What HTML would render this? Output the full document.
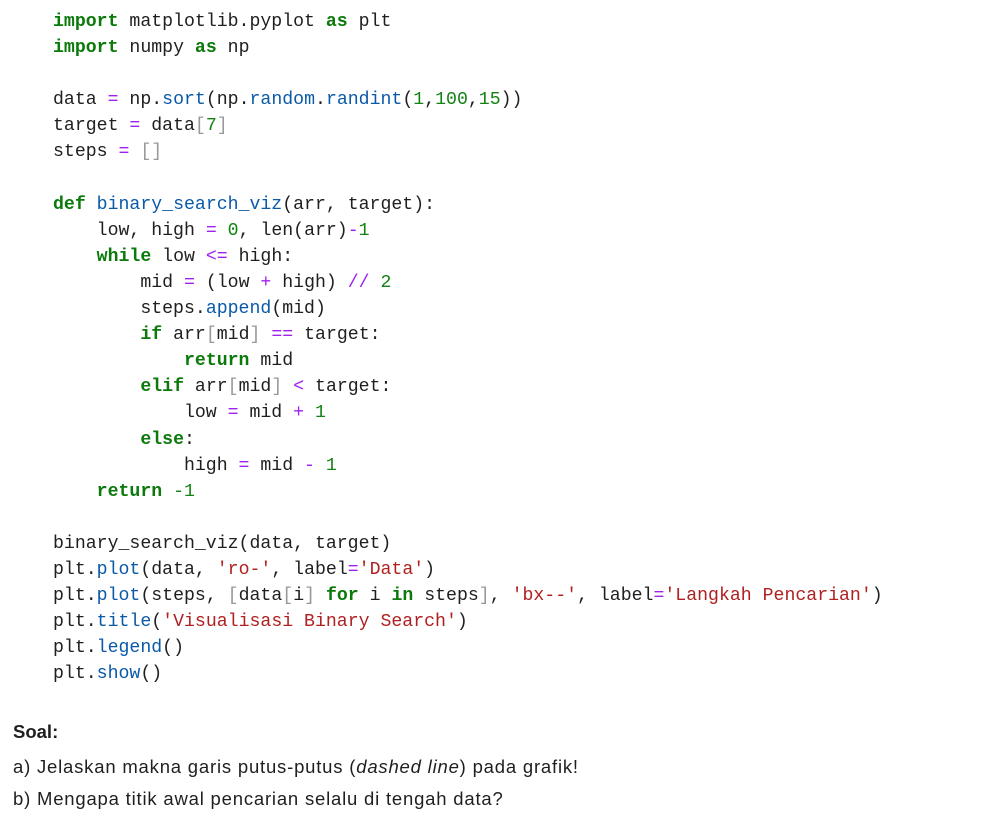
<!DOCTYPE html>
<html><head><meta charset="utf-8"><style>
html,body{margin:0;padding:0;background:#fff;width:991px;height:821px;overflow:hidden}
pre{position:absolute;left:53px;top:9px;margin:0;font-family:"Liberation Mono",monospace;font-size:18.2px;line-height:26.1px;color:#1f1f1f}
.k{font-weight:bold;color:#0b7a0b}
.o{color:#a020f0}
.f{color:#0a5aa8}
.n{color:#128212}
.s{color:#b02020}
.b{color:#999}
.t{position:absolute;left:13px;font-family:"Liberation Sans",sans-serif;font-size:18.5px;color:#1f1f1f}
.w{letter-spacing:0.8px}
</style></head><body>
<pre><span class="k">import</span> matplotlib.pyplot <span class="k">as</span> plt
<span class="k">import</span> numpy <span class="k">as</span> np

data <span class="o">=</span> np.<span class="f">sort</span>(np.<span class="f">random</span>.<span class="f">randint</span>(<span class="n">1</span>,<span class="n">100</span>,<span class="n">15</span>))
target <span class="o">=</span> data<span class="b">[</span><span class="n">7</span><span class="b">]</span>
steps <span class="o">=</span> <span class="b">[]</span>

<span class="k">def</span> <span class="f">binary_search_viz</span>(arr, target):
    low, high <span class="o">=</span> <span class="n">0</span>, len(arr)<span class="o">-</span><span class="n">1</span>
    <span class="k">while</span> low <span class="o">&lt;=</span> high:
        mid <span class="o">=</span> (low <span class="o">+</span> high) <span class="o">//</span> <span class="n">2</span>
        steps.<span class="f">append</span>(mid)
        <span class="k">if</span> arr<span class="b">[</span>mid<span class="b">]</span> <span class="o">==</span> target:
            <span class="k">return</span> mid
        <span class="k">elif</span> arr<span class="b">[</span>mid<span class="b">]</span> <span class="o">&lt;</span> target:
            low <span class="o">=</span> mid <span class="o">+</span> <span class="n">1</span>
        <span class="k">else</span>:
            high <span class="o">=</span> mid <span class="o">-</span> <span class="n">1</span>
    <span class="k">return</span> <span class="n">-1</span>

binary_search_viz(data, target)
plt.<span class="f">plot</span>(data, <span class="s">'ro-'</span>, label<span class="o">=</span><span class="s">'Data'</span>)
plt.<span class="f">plot</span>(steps, <span class="b">[</span>data<span class="b">[</span>i<span class="b">]</span> <span class="k">for</span> i <span class="k">in</span> steps<span class="b">]</span>, <span class="s">'bx--'</span>, label<span class="o">=</span><span class="s">'Langkah Pencarian'</span>)
plt.<span class="f">title</span>(<span class="s">'Visualisasi Binary Search'</span>)
plt.<span class="f">legend</span>()
plt.<span class="f">show</span>()</pre>
<div class="t" style="top:721px;font-weight:bold">Soal:</div>
<div class="t w" style="top:756px">a) Jelaskan makna garis putus-putus (<i>dashed line</i>) pada grafik!</div>
<div class="t w" style="top:788px">b) Mengapa titik awal pencarian selalu di tengah data?</div>
</body></html>
